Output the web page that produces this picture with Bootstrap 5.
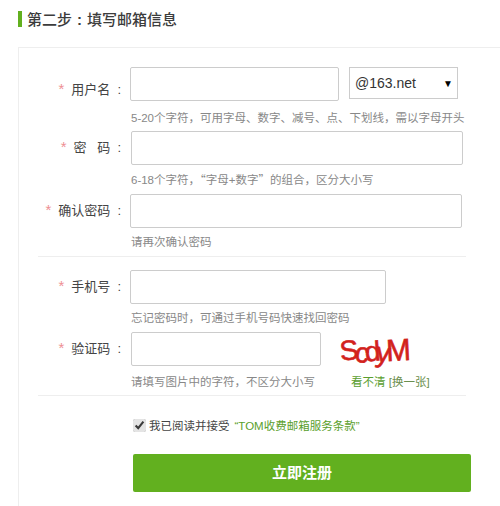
<!DOCTYPE html>
<html lang="zh">
<head>
<meta charset="utf-8">
<title>第二步</title>
<link href="https://cdn.jsdelivr.net/npm/bootstrap@5.3.0/dist/css/bootstrap.min.css" rel="stylesheet">
<style>
html,body{height:506px;overflow:hidden;background:#fff}
body{font-family:"Liberation Sans","Noto Sans CJK SC",sans-serif;font-size:13px;color:#444;position:relative}
.step-head{margin:11px 0 0 18px;height:16px;border-left:4px solid #62b01f;padding-left:5px;font-size:15px;line-height:17px;font-weight:500;color:#3c3c3c;white-space:nowrap}
.step-head b{font-weight:700;margin:0 5px}
.panel-box{margin:20px 0 0 18px;border:1px solid #eee;border-right:0;height:480px;padding-top:19px;position:relative}
.frow{display:flex;align-items:flex-start;height:34px}
.flabel{width:111px;flex:none;line-height:32px;text-align:right;color:#444;font-size:13px;white-space:nowrap;padding-right:9px}
.flabel.low{padding-top:6px}
.flabel i{font-style:normal;color:#ee8f93;margin-right:7px;font-size:15px}
.flabel u{text-decoration:none;margin-left:7px}
.finput{height:34px;border:1px solid #ccc;border-radius:2px;background:#fff;padding:0 8px;outline:0;display:block}
.w-a{width:209px}.w-b{width:332px}.w-c{width:256px}.w-d{width:190px}
.shift{margin-left:1px}
.mail-sel{margin-left:10px;width:109px;height:32px;border:1px solid #ccc;background:#fff;font-size:14px;color:#333;display:flex;align-items:center;justify-content:space-between;padding:1px 1px 0 5px}
.mail-sel span:last-child{font-size:10px;color:#000;margin-right:1px;padding-right:2px}
.hintline{margin-left:112px;font-size:11.5px;line-height:16px;color:#888;white-space:nowrap}
.h-1{height:30px;padding-top:9px}
.h-2{height:29px;padding-top:6px}
.h-3{height:28px;padding-top:6px}
.h-4{height:28px;padding-top:6px}
.h-5{height:29px;padding-top:8px}
.wq{font-family:"Noto Sans CJK SC",sans-serif}
.rule-line{margin:0 34px 0 19px;border-top:1px solid #eee;height:14px}
.code-img{margin:4px 0 0 19px;width:72px;height:30px;color:#d2221c;font-size:28px;line-height:30px;font-family:"Liberation Sans",sans-serif;letter-spacing:-4px;-webkit-text-stroke:.6px #d2221c;white-space:nowrap;display:flex}
.code-img span{display:inline-block;transform-origin:50% 60%}
.code-img .g1{transform:rotate(-6deg)}
.code-img .g2{transform:rotate(8deg) translateY(2px)}
.code-img .g3{transform:rotate(-4deg) translateY(1px)}
.code-img .g4{transform:scale(1.05,1.1) rotate(-3deg);margin-left:1px}
.hint-split{display:flex}
.hint-split a{margin-left:36px;color:#5a9e2f;text-decoration:none}
.hint-split a em{font-style:normal;color:#6b8f4e}
.agree{margin-left:114px;margin-top:8px;display:flex;align-items:center;height:20px;font-size:11.5px;color:#444;white-space:nowrap}
.agree input{margin:-4px 3px 0 0;width:13px;height:13px;accent-color:#e4e4e4}
.agree a{margin-left:5px;color:#5aa02c;text-decoration:none}
.reg-btn{margin:17px 0 0 114px;width:338px;height:38px;background:#62b01f;border:0;border-radius:2px;color:#fff;font-size:15px;font-weight:700;font-family:"Liberation Serif","Noto Sans CJK SC",serif;text-align:center;padding:0}
</style>
</head>
<body>
<div class="step-head">第二步<b>:</b>填写邮箱信息</div>
<div class="panel-box">
  <div class="frow">
    <div class="flabel low"><i>*</i>用户名<u>:</u></div>
    <input class="finput w-a" type="text">
    <div class="mail-sel"><span>@163.net</span><span>▼</span></div>
  </div>
  <div class="hintline h-1">5-20个字符，可用字母、数字、减号、点、下划线，需以字母开头</div>
  <div class="frow">
    <div class="flabel"><i>*</i>密&nbsp;&nbsp;&nbsp;码<u>:</u></div>
    <input class="finput w-b shift" type="password">
  </div>
  <div class="hintline h-2">6-18个字符，<span class="wq">“</span>字母+数字<span class="wq">”</span>的组合，区分大小写</div>
  <div class="frow">
    <div class="flabel"><i>*</i>确认密码<u>:</u></div>
    <input class="finput w-b" type="password">
  </div>
  <div class="hintline h-3">请再次确认密码</div>
  <div class="rule-line"></div>
  <div class="frow">
    <div class="flabel"><i>*</i>手机号<u>:</u></div>
    <input class="finput w-c" type="text">
  </div>
  <div class="hintline h-4">忘记密码时，可通过手机号码快速找回密码</div>
  <div class="frow">
    <div class="flabel"><i>*</i>验证码<u>:</u></div>
    <input class="finput w-d shift" type="text">
    <div class="code-img"><span class="g1">S</span><span class="g2">c</span><span class="g3">d</span><span class="g2">y</span><span class="g4">M</span></div>
  </div>
  <div class="hintline h-5 hint-split"><span>请填写图片中的字符，不区分大小写</span><a href="#">看不清 <em>[换一张]</em></a></div>
  <div class="rule-line"></div>
  <div class="agree"><input type="checkbox" checked><span>我已阅读并接受</span><a href="#">“TOM收费邮箱服务条款”</a></div>
  <button class="reg-btn btn" type="button">立即注册</button>
</div>
<script src="https://cdn.jsdelivr.net/npm/bootstrap@5.3.0/dist/js/bootstrap.bundle.min.js"></script>
</body>
</html>
